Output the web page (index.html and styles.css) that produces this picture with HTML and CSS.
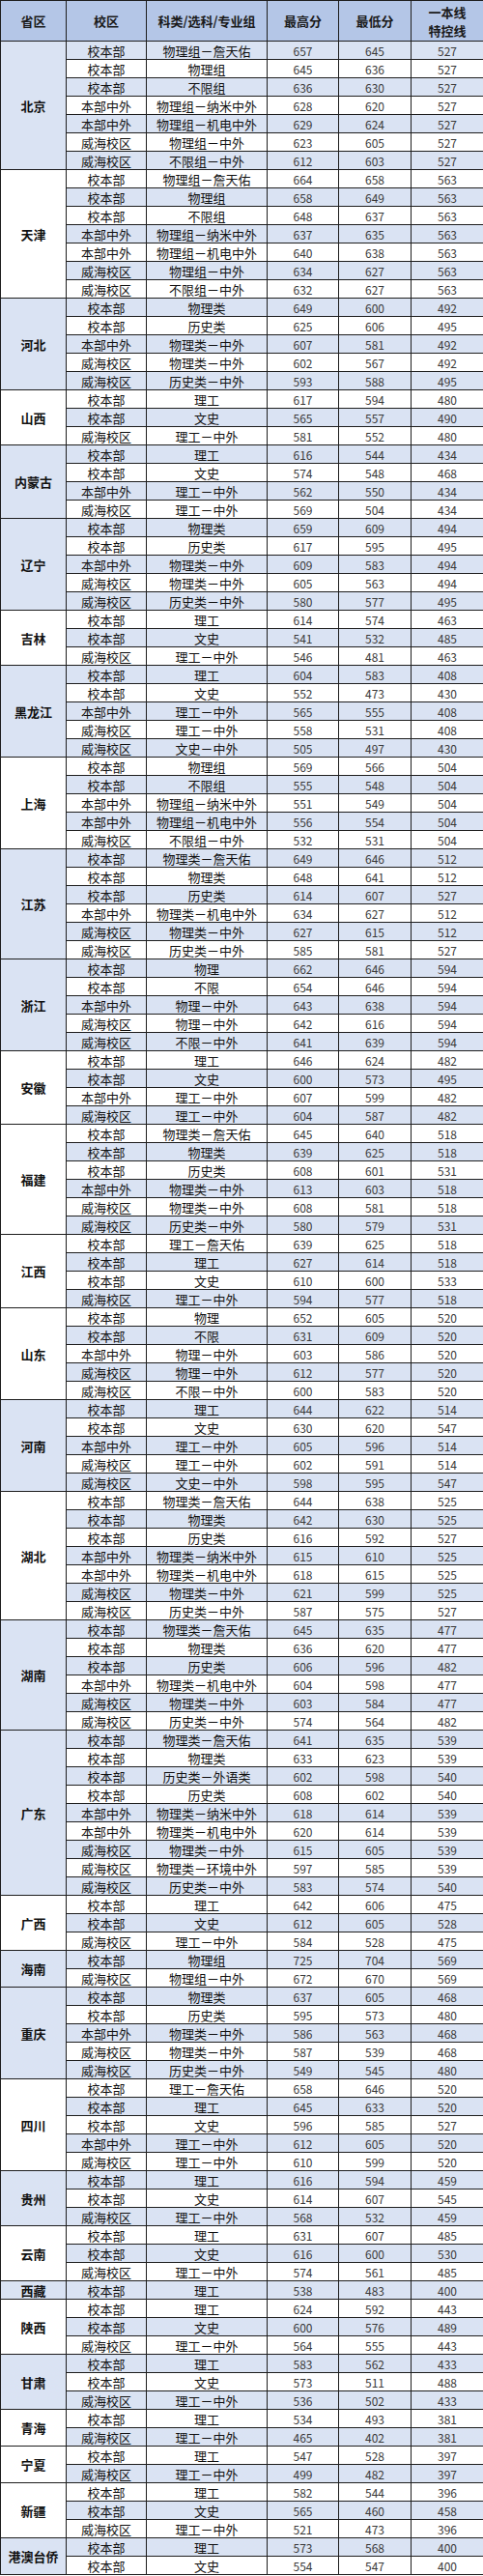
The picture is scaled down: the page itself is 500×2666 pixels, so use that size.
FILE: index.html
```html
<!DOCTYPE html>
<html lang="zh-CN">
<head>
<meta charset="utf-8">
<title>录取分数</title>
<link rel="stylesheet" href="styles.css">
</head>
<body>
<table class="scores">
<colgroup><col class="c1"><col class="c2"><col class="c3"><col class="c4"><col class="c5"><col class="c6"></colgroup>
<thead>
<tr class="head"><th>省区</th><th>校区</th><th>科类/选科/专业组</th><th>最高分</th><th>最低分</th><th>一本线<br>特控线</th></tr>
</thead>
<tbody>
<tr class="b"><td class="p" rowspan="7">北京</td><td>校本部</td><td>物理组－詹天佑</td><td class="n">657</td><td class="n">645</td><td class="n">527</td></tr>
<tr><td>校本部</td><td>物理组</td><td class="n">645</td><td class="n">636</td><td class="n">527</td></tr>
<tr class="b"><td>校本部</td><td>不限组</td><td class="n">636</td><td class="n">630</td><td class="n">527</td></tr>
<tr><td>本部中外</td><td>物理组－纳米中外</td><td class="n">628</td><td class="n">620</td><td class="n">527</td></tr>
<tr class="b"><td>本部中外</td><td>物理组－机电中外</td><td class="n">629</td><td class="n">624</td><td class="n">527</td></tr>
<tr><td>威海校区</td><td>物理组－中外</td><td class="n">623</td><td class="n">605</td><td class="n">527</td></tr>
<tr class="b"><td>威海校区</td><td>不限组－中外</td><td class="n">612</td><td class="n">603</td><td class="n">527</td></tr>
<tr><td class="p" rowspan="7">天津</td><td>校本部</td><td>物理组－詹天佑</td><td class="n">664</td><td class="n">658</td><td class="n">563</td></tr>
<tr class="b"><td>校本部</td><td>物理组</td><td class="n">658</td><td class="n">649</td><td class="n">563</td></tr>
<tr><td>校本部</td><td>不限组</td><td class="n">648</td><td class="n">637</td><td class="n">563</td></tr>
<tr class="b"><td>本部中外</td><td>物理组－纳米中外</td><td class="n">637</td><td class="n">635</td><td class="n">563</td></tr>
<tr><td>本部中外</td><td>物理组－机电中外</td><td class="n">640</td><td class="n">638</td><td class="n">563</td></tr>
<tr class="b"><td>威海校区</td><td>物理组－中外</td><td class="n">634</td><td class="n">627</td><td class="n">563</td></tr>
<tr><td>威海校区</td><td>不限组－中外</td><td class="n">632</td><td class="n">627</td><td class="n">563</td></tr>
<tr class="b"><td class="p" rowspan="5">河北</td><td>校本部</td><td>物理类</td><td class="n">649</td><td class="n">600</td><td class="n">492</td></tr>
<tr><td>校本部</td><td>历史类</td><td class="n">625</td><td class="n">606</td><td class="n">495</td></tr>
<tr class="b"><td>本部中外</td><td>物理类－中外</td><td class="n">607</td><td class="n">581</td><td class="n">492</td></tr>
<tr><td>威海校区</td><td>物理类－中外</td><td class="n">602</td><td class="n">567</td><td class="n">492</td></tr>
<tr class="b"><td>威海校区</td><td>历史类－中外</td><td class="n">593</td><td class="n">588</td><td class="n">495</td></tr>
<tr><td class="p" rowspan="3">山西</td><td>校本部</td><td>理工</td><td class="n">617</td><td class="n">594</td><td class="n">480</td></tr>
<tr class="b"><td>校本部</td><td>文史</td><td class="n">565</td><td class="n">557</td><td class="n">490</td></tr>
<tr><td>威海校区</td><td>理工－中外</td><td class="n">581</td><td class="n">552</td><td class="n">480</td></tr>
<tr class="b"><td class="p" rowspan="4">内蒙古</td><td>校本部</td><td>理工</td><td class="n">616</td><td class="n">544</td><td class="n">434</td></tr>
<tr><td>校本部</td><td>文史</td><td class="n">574</td><td class="n">548</td><td class="n">468</td></tr>
<tr class="b"><td>本部中外</td><td>理工－中外</td><td class="n">562</td><td class="n">550</td><td class="n">434</td></tr>
<tr><td>威海校区</td><td>理工－中外</td><td class="n">569</td><td class="n">504</td><td class="n">434</td></tr>
<tr class="b"><td class="p" rowspan="5">辽宁</td><td>校本部</td><td>物理类</td><td class="n">659</td><td class="n">609</td><td class="n">494</td></tr>
<tr><td>校本部</td><td>历史类</td><td class="n">617</td><td class="n">595</td><td class="n">495</td></tr>
<tr class="b"><td>本部中外</td><td>物理类－中外</td><td class="n">609</td><td class="n">583</td><td class="n">494</td></tr>
<tr><td>威海校区</td><td>物理类－中外</td><td class="n">605</td><td class="n">563</td><td class="n">494</td></tr>
<tr class="b"><td>威海校区</td><td>历史类－中外</td><td class="n">580</td><td class="n">577</td><td class="n">495</td></tr>
<tr><td class="p" rowspan="3">吉林</td><td>校本部</td><td>理工</td><td class="n">614</td><td class="n">574</td><td class="n">463</td></tr>
<tr class="b"><td>校本部</td><td>文史</td><td class="n">541</td><td class="n">532</td><td class="n">485</td></tr>
<tr><td>威海校区</td><td>理工－中外</td><td class="n">546</td><td class="n">481</td><td class="n">463</td></tr>
<tr class="b"><td class="p" rowspan="5">黑龙江</td><td>校本部</td><td>理工</td><td class="n">604</td><td class="n">583</td><td class="n">408</td></tr>
<tr><td>校本部</td><td>文史</td><td class="n">552</td><td class="n">473</td><td class="n">430</td></tr>
<tr class="b"><td>本部中外</td><td>理工－中外</td><td class="n">565</td><td class="n">555</td><td class="n">408</td></tr>
<tr><td>威海校区</td><td>理工－中外</td><td class="n">558</td><td class="n">531</td><td class="n">408</td></tr>
<tr class="b"><td>威海校区</td><td>文史－中外</td><td class="n">505</td><td class="n">497</td><td class="n">430</td></tr>
<tr><td class="p" rowspan="5">上海</td><td>校本部</td><td>物理组</td><td class="n">569</td><td class="n">566</td><td class="n">504</td></tr>
<tr class="b"><td>校本部</td><td>不限组</td><td class="n">555</td><td class="n">548</td><td class="n">504</td></tr>
<tr><td>本部中外</td><td>物理组－纳米中外</td><td class="n">551</td><td class="n">549</td><td class="n">504</td></tr>
<tr class="b"><td>本部中外</td><td>物理组－机电中外</td><td class="n">556</td><td class="n">554</td><td class="n">504</td></tr>
<tr><td>威海校区</td><td>不限组－中外</td><td class="n">532</td><td class="n">531</td><td class="n">504</td></tr>
<tr class="b"><td class="p" rowspan="6">江苏</td><td>校本部</td><td>物理类－詹天佑</td><td class="n">649</td><td class="n">646</td><td class="n">512</td></tr>
<tr><td>校本部</td><td>物理类</td><td class="n">648</td><td class="n">641</td><td class="n">512</td></tr>
<tr class="b"><td>校本部</td><td>历史类</td><td class="n">614</td><td class="n">607</td><td class="n">527</td></tr>
<tr><td>本部中外</td><td>物理类－机电中外</td><td class="n">634</td><td class="n">627</td><td class="n">512</td></tr>
<tr class="b"><td>威海校区</td><td>物理类－中外</td><td class="n">627</td><td class="n">615</td><td class="n">512</td></tr>
<tr><td>威海校区</td><td>历史类－中外</td><td class="n">585</td><td class="n">581</td><td class="n">527</td></tr>
<tr class="b"><td class="p" rowspan="5">浙江</td><td>校本部</td><td>物理</td><td class="n">662</td><td class="n">646</td><td class="n">594</td></tr>
<tr><td>校本部</td><td>不限</td><td class="n">654</td><td class="n">646</td><td class="n">594</td></tr>
<tr class="b"><td>本部中外</td><td>物理－中外</td><td class="n">643</td><td class="n">638</td><td class="n">594</td></tr>
<tr><td>威海校区</td><td>物理－中外</td><td class="n">642</td><td class="n">616</td><td class="n">594</td></tr>
<tr class="b"><td>威海校区</td><td>不限－中外</td><td class="n">641</td><td class="n">639</td><td class="n">594</td></tr>
<tr><td class="p" rowspan="4">安徽</td><td>校本部</td><td>理工</td><td class="n">646</td><td class="n">624</td><td class="n">482</td></tr>
<tr class="b"><td>校本部</td><td>文史</td><td class="n">600</td><td class="n">573</td><td class="n">495</td></tr>
<tr><td>本部中外</td><td>理工－中外</td><td class="n">607</td><td class="n">599</td><td class="n">482</td></tr>
<tr class="b"><td>威海校区</td><td>理工－中外</td><td class="n">604</td><td class="n">587</td><td class="n">482</td></tr>
<tr><td class="p" rowspan="6">福建</td><td>校本部</td><td>物理类－詹天佑</td><td class="n">645</td><td class="n">640</td><td class="n">518</td></tr>
<tr class="b"><td>校本部</td><td>物理类</td><td class="n">639</td><td class="n">625</td><td class="n">518</td></tr>
<tr><td>校本部</td><td>历史类</td><td class="n">608</td><td class="n">601</td><td class="n">531</td></tr>
<tr class="b"><td>本部中外</td><td>物理类－中外</td><td class="n">613</td><td class="n">603</td><td class="n">518</td></tr>
<tr><td>威海校区</td><td>物理类－中外</td><td class="n">608</td><td class="n">581</td><td class="n">518</td></tr>
<tr class="b"><td>威海校区</td><td>历史类－中外</td><td class="n">580</td><td class="n">579</td><td class="n">531</td></tr>
<tr><td class="p" rowspan="4">江西</td><td>校本部</td><td>理工－詹天佑</td><td class="n">639</td><td class="n">625</td><td class="n">518</td></tr>
<tr class="b"><td>校本部</td><td>理工</td><td class="n">627</td><td class="n">614</td><td class="n">518</td></tr>
<tr><td>校本部</td><td>文史</td><td class="n">610</td><td class="n">600</td><td class="n">533</td></tr>
<tr class="b"><td>威海校区</td><td>理工－中外</td><td class="n">594</td><td class="n">577</td><td class="n">518</td></tr>
<tr><td class="p" rowspan="5">山东</td><td>校本部</td><td>物理</td><td class="n">652</td><td class="n">605</td><td class="n">520</td></tr>
<tr class="b"><td>校本部</td><td>不限</td><td class="n">631</td><td class="n">609</td><td class="n">520</td></tr>
<tr><td>本部中外</td><td>物理－中外</td><td class="n">603</td><td class="n">586</td><td class="n">520</td></tr>
<tr class="b"><td>威海校区</td><td>物理－中外</td><td class="n">612</td><td class="n">577</td><td class="n">520</td></tr>
<tr><td>威海校区</td><td>不限－中外</td><td class="n">600</td><td class="n">583</td><td class="n">520</td></tr>
<tr class="b"><td class="p" rowspan="5">河南</td><td>校本部</td><td>理工</td><td class="n">644</td><td class="n">622</td><td class="n">514</td></tr>
<tr><td>校本部</td><td>文史</td><td class="n">630</td><td class="n">620</td><td class="n">547</td></tr>
<tr class="b"><td>本部中外</td><td>理工－中外</td><td class="n">605</td><td class="n">596</td><td class="n">514</td></tr>
<tr><td>威海校区</td><td>理工－中外</td><td class="n">602</td><td class="n">591</td><td class="n">514</td></tr>
<tr class="b"><td>威海校区</td><td>文史－中外</td><td class="n">598</td><td class="n">595</td><td class="n">547</td></tr>
<tr><td class="p" rowspan="7">湖北</td><td>校本部</td><td>物理类－詹天佑</td><td class="n">644</td><td class="n">638</td><td class="n">525</td></tr>
<tr class="b"><td>校本部</td><td>物理类</td><td class="n">642</td><td class="n">630</td><td class="n">525</td></tr>
<tr><td>校本部</td><td>历史类</td><td class="n">616</td><td class="n">592</td><td class="n">527</td></tr>
<tr class="b"><td>本部中外</td><td>物理类－纳米中外</td><td class="n">615</td><td class="n">610</td><td class="n">525</td></tr>
<tr><td>本部中外</td><td>物理类－机电中外</td><td class="n">618</td><td class="n">615</td><td class="n">525</td></tr>
<tr class="b"><td>威海校区</td><td>物理类－中外</td><td class="n">621</td><td class="n">599</td><td class="n">525</td></tr>
<tr><td>威海校区</td><td>历史类－中外</td><td class="n">587</td><td class="n">575</td><td class="n">527</td></tr>
<tr class="b"><td class="p" rowspan="6">湖南</td><td>校本部</td><td>物理类－詹天佑</td><td class="n">645</td><td class="n">635</td><td class="n">477</td></tr>
<tr><td>校本部</td><td>物理类</td><td class="n">636</td><td class="n">620</td><td class="n">477</td></tr>
<tr class="b"><td>校本部</td><td>历史类</td><td class="n">606</td><td class="n">596</td><td class="n">482</td></tr>
<tr><td>本部中外</td><td>物理类－机电中外</td><td class="n">604</td><td class="n">598</td><td class="n">477</td></tr>
<tr class="b"><td>威海校区</td><td>物理类－中外</td><td class="n">603</td><td class="n">584</td><td class="n">477</td></tr>
<tr><td>威海校区</td><td>历史类－中外</td><td class="n">574</td><td class="n">564</td><td class="n">482</td></tr>
<tr class="b"><td class="p" rowspan="9">广东</td><td>校本部</td><td>物理类－詹天佑</td><td class="n">641</td><td class="n">635</td><td class="n">539</td></tr>
<tr><td>校本部</td><td>物理类</td><td class="n">633</td><td class="n">623</td><td class="n">539</td></tr>
<tr class="b"><td>校本部</td><td>历史类－外语类</td><td class="n">602</td><td class="n">598</td><td class="n">540</td></tr>
<tr><td>校本部</td><td>历史类</td><td class="n">608</td><td class="n">602</td><td class="n">540</td></tr>
<tr class="b"><td>本部中外</td><td>物理类－纳米中外</td><td class="n">618</td><td class="n">614</td><td class="n">539</td></tr>
<tr><td>本部中外</td><td>物理类－机电中外</td><td class="n">620</td><td class="n">614</td><td class="n">539</td></tr>
<tr class="b"><td>威海校区</td><td>物理类－中外</td><td class="n">615</td><td class="n">605</td><td class="n">539</td></tr>
<tr><td>威海校区</td><td>物理类－环境中外</td><td class="n">597</td><td class="n">585</td><td class="n">539</td></tr>
<tr class="b"><td>威海校区</td><td>历史类－中外</td><td class="n">583</td><td class="n">574</td><td class="n">540</td></tr>
<tr><td class="p" rowspan="3">广西</td><td>校本部</td><td>理工</td><td class="n">642</td><td class="n">606</td><td class="n">475</td></tr>
<tr class="b"><td>校本部</td><td>文史</td><td class="n">612</td><td class="n">605</td><td class="n">528</td></tr>
<tr><td>威海校区</td><td>理工－中外</td><td class="n">584</td><td class="n">528</td><td class="n">475</td></tr>
<tr class="b"><td class="p" rowspan="2">海南</td><td>校本部</td><td>物理组</td><td class="n">725</td><td class="n">704</td><td class="n">569</td></tr>
<tr><td>威海校区</td><td>物理组－中外</td><td class="n">672</td><td class="n">670</td><td class="n">569</td></tr>
<tr class="b"><td class="p" rowspan="5">重庆</td><td>校本部</td><td>物理类</td><td class="n">637</td><td class="n">605</td><td class="n">468</td></tr>
<tr><td>校本部</td><td>历史类</td><td class="n">595</td><td class="n">573</td><td class="n">480</td></tr>
<tr class="b"><td>本部中外</td><td>物理类－中外</td><td class="n">586</td><td class="n">563</td><td class="n">468</td></tr>
<tr><td>威海校区</td><td>物理类－中外</td><td class="n">587</td><td class="n">539</td><td class="n">468</td></tr>
<tr class="b"><td>威海校区</td><td>历史类－中外</td><td class="n">549</td><td class="n">545</td><td class="n">480</td></tr>
<tr><td class="p" rowspan="5">四川</td><td>校本部</td><td>理工－詹天佑</td><td class="n">658</td><td class="n">646</td><td class="n">520</td></tr>
<tr class="b"><td>校本部</td><td>理工</td><td class="n">645</td><td class="n">633</td><td class="n">520</td></tr>
<tr><td>校本部</td><td>文史</td><td class="n">596</td><td class="n">585</td><td class="n">527</td></tr>
<tr class="b"><td>本部中外</td><td>理工－中外</td><td class="n">612</td><td class="n">605</td><td class="n">520</td></tr>
<tr><td>威海校区</td><td>理工－中外</td><td class="n">610</td><td class="n">599</td><td class="n">520</td></tr>
<tr class="b"><td class="p" rowspan="3">贵州</td><td>校本部</td><td>理工</td><td class="n">616</td><td class="n">594</td><td class="n">459</td></tr>
<tr><td>校本部</td><td>文史</td><td class="n">614</td><td class="n">607</td><td class="n">545</td></tr>
<tr class="b"><td>威海校区</td><td>理工－中外</td><td class="n">568</td><td class="n">532</td><td class="n">459</td></tr>
<tr><td class="p" rowspan="3">云南</td><td>校本部</td><td>理工</td><td class="n">631</td><td class="n">607</td><td class="n">485</td></tr>
<tr class="b"><td>校本部</td><td>文史</td><td class="n">616</td><td class="n">600</td><td class="n">530</td></tr>
<tr><td>威海校区</td><td>理工－中外</td><td class="n">574</td><td class="n">561</td><td class="n">485</td></tr>
<tr class="b"><td class="p">西藏</td><td>校本部</td><td>理工</td><td class="n">538</td><td class="n">483</td><td class="n">400</td></tr>
<tr><td class="p" rowspan="3">陕西</td><td>校本部</td><td>理工</td><td class="n">624</td><td class="n">592</td><td class="n">443</td></tr>
<tr class="b"><td>校本部</td><td>文史</td><td class="n">600</td><td class="n">576</td><td class="n">489</td></tr>
<tr><td>威海校区</td><td>理工－中外</td><td class="n">564</td><td class="n">555</td><td class="n">443</td></tr>
<tr class="b"><td class="p" rowspan="3">甘肃</td><td>校本部</td><td>理工</td><td class="n">583</td><td class="n">562</td><td class="n">433</td></tr>
<tr><td>校本部</td><td>文史</td><td class="n">573</td><td class="n">511</td><td class="n">488</td></tr>
<tr class="b"><td>威海校区</td><td>理工－中外</td><td class="n">536</td><td class="n">502</td><td class="n">433</td></tr>
<tr><td class="p" rowspan="2">青海</td><td>校本部</td><td>理工</td><td class="n">534</td><td class="n">493</td><td class="n">381</td></tr>
<tr class="b"><td>威海校区</td><td>理工－中外</td><td class="n">465</td><td class="n">402</td><td class="n">381</td></tr>
<tr><td class="p" rowspan="2">宁夏</td><td>校本部</td><td>理工</td><td class="n">547</td><td class="n">528</td><td class="n">397</td></tr>
<tr class="b"><td>威海校区</td><td>理工－中外</td><td class="n">499</td><td class="n">482</td><td class="n">397</td></tr>
<tr><td class="p" rowspan="3">新疆</td><td>校本部</td><td>理工</td><td class="n">582</td><td class="n">544</td><td class="n">396</td></tr>
<tr class="b"><td>校本部</td><td>文史</td><td class="n">565</td><td class="n">460</td><td class="n">458</td></tr>
<tr><td>威海校区</td><td>理工－中外</td><td class="n">521</td><td class="n">473</td><td class="n">396</td></tr>
<tr class="b"><td class="p" rowspan="2">港澳台侨</td><td>校本部</td><td>理工</td><td class="n">573</td><td class="n">568</td><td class="n">400</td></tr>
<tr><td>校本部</td><td>文史</td><td class="n">554</td><td class="n">547</td><td class="n">400</td></tr>
</tbody>
</table>
</body>
</html>
```

FILE: styles.css
```css
html, body {
  margin: 0;
  padding: 0;
  background: #ffffff;
}

body {
  font-family: "Noto Sans CJK SC", "Noto Sans", sans-serif;
  color: #111111;
}

.scores {
  border-collapse: collapse;
  table-layout: fixed;
  width: 500px;
}

.c1 { width: 68px; }
.c2 { width: 83px; }
.c3 { width: 125px; }
.c4 { width: 74px; }
.c5 { width: 75px; }
.c6 { width: 75px; }

.scores th,
.scores td {
  border: 1px solid #1e1e1e;
  padding: 0;
  text-align: center;
  vertical-align: middle;
  white-space: nowrap;
  overflow: hidden;
}

.scores .head {
  height: 42px;
}

.scores th {
  background: #b4c6e7;
  font-size: 13px;
  font-weight: 700;
  line-height: 19px;
  color: #1a1a1a;
}

.scores tbody tr {
  height: 19px;
}

.scores td {
  font-size: 13px;
  line-height: 17px;
  background: #ffffff;
}

.scores tr.b td {
  background: #dae3f3;
}

.scores td.p {
  font-weight: 700;
  font-size: 13px;
}

.scores td.n {
  font-size: 12px;
  color: #3a3a3a;
}
```
